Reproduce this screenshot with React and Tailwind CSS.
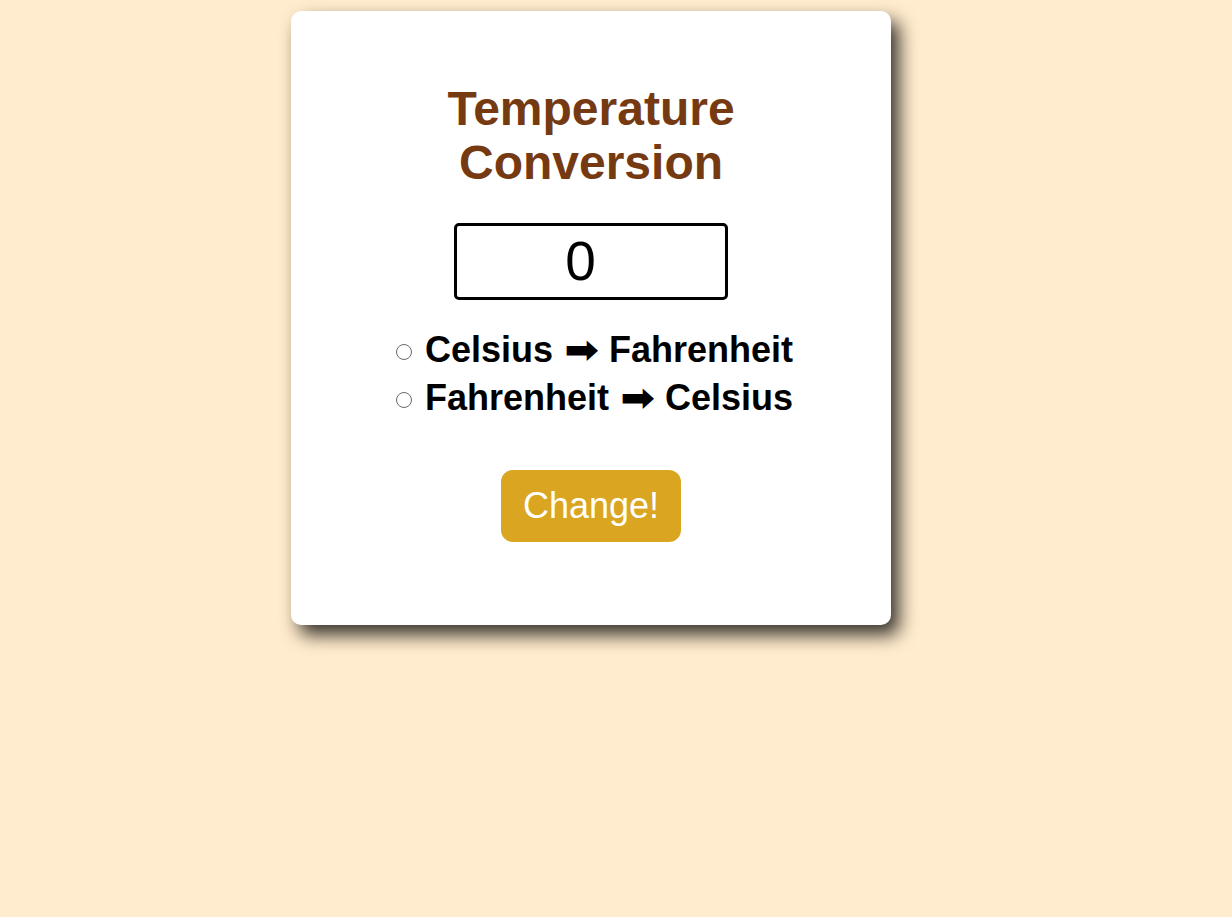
import React, { useState } from 'react';

export default function App() {
  const [value, setValue] = useState('0');
  const [mode, setMode] = useState('');

  const radio =
    'appearance-none w-[16px] h-[16px] ml-[7px] mr-[3px] align-middle rounded-full border-[1.5px] border-[#6b6b6b] bg-white checked:border-[5px] checked:border-[#1a73e8]';

  return (
    <div className="min-h-[917px] bg-[#ffebcd] pt-[11px] pl-[291px] font-['Liberation_Sans',Arial,sans-serif]">
      <div className="w-[600px] h-[614px] bg-white rounded-[10px] shadow-[8px_10px_18px_rgba(0,0,0,0.78)] flex flex-col items-center pt-[71px]">
        <h1 className="w-[320px] text-center text-[48px] leading-[54px] font-bold text-[#763a12]">
          Temperature Conversion
        </h1>

        <input
          type="number"
          value={value}
          onChange={(e) => setValue(e.target.value)}
          className="mt-[33px] w-[274px] h-[77px] border-[3px] border-black rounded-[5px] pr-[6px] text-center text-[55px] text-black outline-none font-['Liberation_Sans',Arial,sans-serif]"
        />

        <div className="mt-[26px] flex flex-col text-[36px] leading-[48px] font-bold text-black">
          <label className="whitespace-nowrap">
            <input
              type="radio"
              name="mode"
              className={radio}
              checked={mode === 'cf'}
              onChange={() => setMode('cf')}
            />{' '}
            Celsius <span className="inline-block mx-[3px] scale-x-110">➡</span> Fahrenheit
          </label>
          <label className="whitespace-nowrap">
            <input
              type="radio"
              name="mode"
              className={radio}
              checked={mode === 'fc'}
              onChange={() => setMode('fc')}
            />{' '}
            Fahrenheit <span className="inline-block mx-[3px] scale-x-110">➡</span> Celsius
          </label>
        </div>

        <button className="mt-[48px] bg-[#daa520] text-white text-[36px] leading-[42px] px-[22px] py-[15px] rounded-[12px]">
          Change!
        </button>
      </div>
    </div>
  );
}
